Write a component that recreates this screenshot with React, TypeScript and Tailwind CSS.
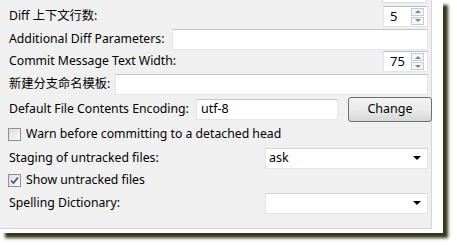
const font = { fontFamily: '"Noto Sans", "Noto Sans CJK SC", sans-serif' };

function Spinner({ value }: { value: string }) {
  return (
    <div className="flex items-center h-[21px] w-[45px] bg-white border border-[#e3e5ea] border-t-[#b9bcc4]">
      <span className="flex-1 pl-[6px] text-[13px] leading-none text-black">{value}</span>
      <div className="flex flex-col gap-[1px] pr-[3px]">
        <div className="w-[13px] h-[8px] border border-[#c6ccd6] bg-[#f4f6fa] flex items-center justify-center">
          <div className="w-0 h-0 border-l-[3px] border-r-[3px] border-b-[3px] border-l-transparent border-r-transparent border-b-[#7c8597]" />
        </div>
        <div className="w-[13px] h-[8px] border border-[#c6ccd6] bg-[#f4f6fa] flex items-center justify-center">
          <div className="w-0 h-0 border-l-[3px] border-r-[3px] border-t-[3px] border-l-transparent border-r-transparent border-t-[#7c8597]" />
        </div>
      </div>
    </div>
  );
}

function TextBox({ width, value }: { width: string; value?: string }) {
  return (
    <div className={`${width} shrink-0 h-[21px] bg-white border border-[#e3e5ea] border-t-[#c3c5cb] flex items-center pl-[4px] text-[12.5px] text-black`}>
      {value}
    </div>
  );
}

function Select({ value }: { value?: string }) {
  return (
    <div className="w-[163px] shrink-0 h-[21px] bg-white border border-[#e3e5ea] border-t-[#d2d4d9] flex items-center pl-[3px] pr-[6px] text-[12.5px] text-black">
      <span className="flex-1">{value}</span>
      <div className="w-0 h-0 border-l-[4px] border-r-[4px] border-t-[4px] border-l-transparent border-r-transparent border-t-black" />
    </div>
  );
}

function Check({ checked }: { checked?: boolean }) {
  return (
    <div className="w-[13px] h-[13px] shrink-0 border border-[#8f8f8f] bg-gradient-to-br from-[#dcdcdc] to-[#fbfbfb] flex items-center justify-center">
      {checked && (
        <svg width="9" height="9" viewBox="0 0 9 9">
          <path d="M1 4.5 L3.5 7 L8 1.5" fill="none" stroke="#3a4f87" strokeWidth="1.6" />
        </svg>
      )}
    </div>
  );
}

export default function App() {
  return (
    <div className="w-[457px] h-[245px] bg-white overflow-hidden" style={font}>
      <div className="w-[443px] h-[233px] bg-white shadow-[5px_5px_3px_#35351a]">
        <div className="w-[432px] h-[229px] bg-[#f0f0f0] border-r border-b border-[#d6d6d6] pl-[9px] pr-[3px] text-[12.25px] text-black whitespace-nowrap">
          {/* tail of the row above */}
          <div className="h-[4px] flex justify-end pr-[1px]">
            <div className="w-[45px] h-[3px] border-b border-x border-[#d6d9df] bg-white" />
          </div>

          <div className="h-[24px] flex items-center justify-between">
            <span>Diff 上下文行数:</span>
            <Spinner value="5" />
          </div>

          <div className="h-[22px] flex items-center justify-between">
            <span>Additional Diff Parameters:</span>
            <TextBox width="w-[256px]" />
          </div>

          <div className="h-[23px] flex items-center justify-between">
            <span>Commit Message Text Width:</span>
            <Spinner value="75" />
          </div>

          <div className="h-[23px] flex items-center justify-between">
            <span>新建分支命名模板:</span>
            <TextBox width="w-[313px]" />
          </div>

          <div className="h-[26px] flex items-center justify-between">
            <span>Default File Contents Encoding:</span>
            <div className="flex items-center gap-[10px]">
              <TextBox width="w-[142px]" value="utf-8" />
              <button className="w-[84px] h-[25px] -mr-[4px] rounded-[3px] border border-[#707070] bg-gradient-to-b from-[#f2f2f2] via-[#ebebeb] to-[#d6d6d6] text-[12.5px] text-black">
                Change
              </button>
            </div>
          </div>

          <div className="h-[25px] flex items-center gap-[5px] -ml-[1px]">
            <Check />
            <span>Warn before committing to a detached head</span>
          </div>

          <div className="h-[22px] flex items-center justify-between">
            <span>Staging of untracked files:</span>
            <Select value="ask" />
          </div>

          <div className="h-[23px] flex items-center gap-[5px] -ml-[1px]">
            <Check checked />
            <span>Show untracked files</span>
          </div>

          <div className="h-[22px] flex items-center justify-between">
            <span>Spelling Dictionary:</span>
            <Select />
          </div>
        </div>
      </div>
    </div>
  );
}
